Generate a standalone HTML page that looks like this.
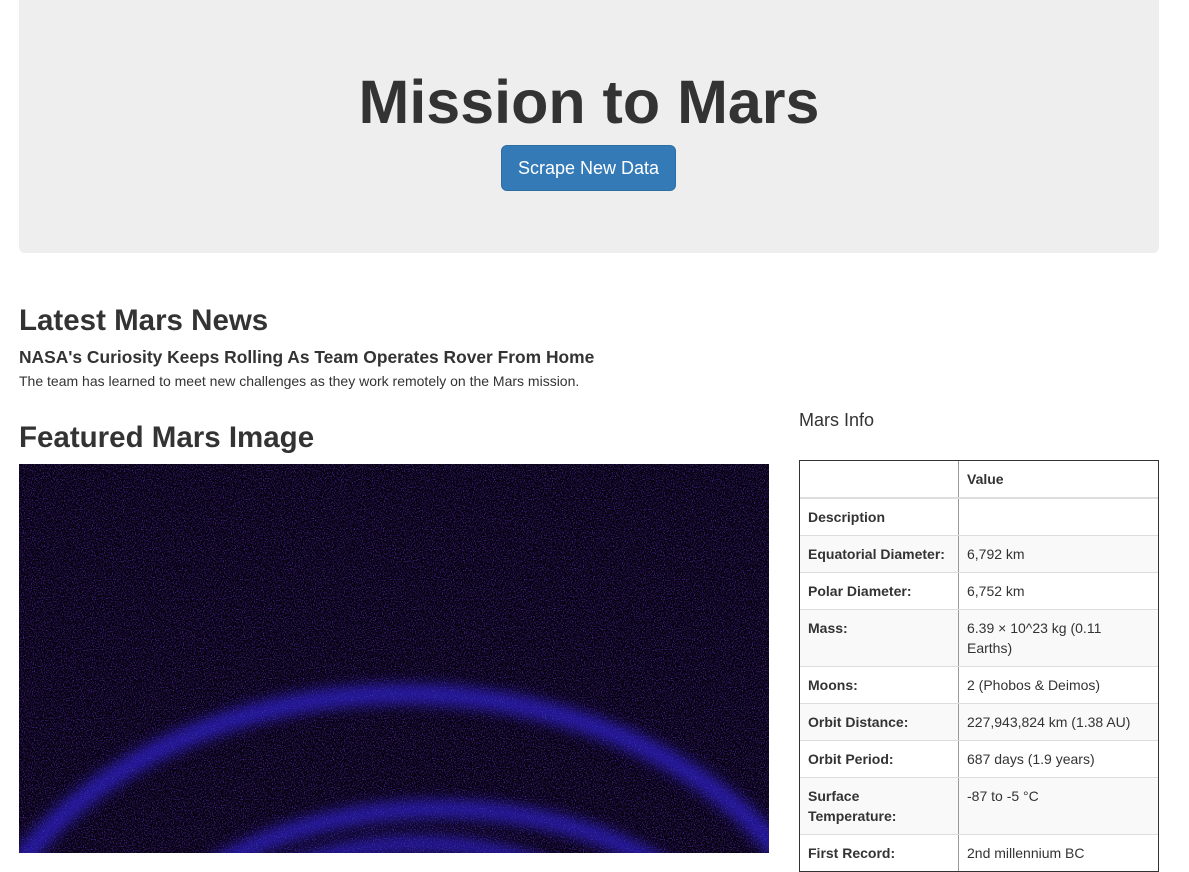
<!DOCTYPE html>
<html><head><meta charset="utf-8"><style>
body{margin:0;background:#fff;font-family:"Liberation Sans",Helvetica,Arial,sans-serif;color:#333;font-size:14px;line-height:1.42857;width:1189px;height:853px;overflow:hidden;position:relative}
.jumbo{position:absolute;left:19px;top:-10px;width:1140px;height:263px;background:#eee;border-radius:6px;text-align:center}
.jumbo h1{margin:0;position:absolute;top:74px;width:100%;font-size:61px;font-weight:bold;line-height:76px;color:#333}
.btn{position:absolute;left:482px;top:155px;width:175px;height:46px;box-sizing:border-box;background:#337ab7;border:1px solid #2e6da4;border-radius:6px;color:#fff;font-size:18px;line-height:44px}
.a{position:absolute;margin:0;white-space:nowrap}
h2.a{font-size:29.5px;font-weight:bold;line-height:33px}
table{position:absolute;left:799px;top:460px;width:360px;border-collapse:collapse;outline:1px solid #333;outline-offset:-1px}
td,th{border:1px solid #ddd;padding:8px;line-height:20px;vertical-align:top;text-align:left;font-size:14px}
th{font-weight:bold}
thead th{border-bottom:2px solid #ddd}
tr.s td,tr.s th{background:#f9f9f9}
th.h1c{width:142px}
tr td:last-child, tr th:last-child{border-right:1px solid #333}
tr th:first-child{border-left:1px solid #333;border-right:1px solid #999}
</style></head><body>
<div class="jumbo"><h1>Mission to Mars</h1><div class="btn">Scrape New Data</div></div>
<h2 class="a" style="left:19px;top:304px">Latest Mars News</h2>
<div class="a" style="left:19px;top:346px;font-size:17.4px;font-weight:bold;line-height:22px">NASA's Curiosity Keeps Rolling As Team Operates Rover From Home</div>
<div class="a" style="left:19px;top:372px;font-size:14px">The team has learned to meet new challenges as they work remotely on the Mars mission.</div>
<h2 class="a" style="left:19px;top:421px">Featured Mars Image</h2>
<div class="a" style="left:799px;top:409px;font-size:18px;font-weight:500;line-height:22px">Mars Info</div>
<svg class="a" style="left:19px;top:464px" width="750" height="389" viewBox="0 0 750 389">
<defs>
<filter id="n" x="0" y="0" width="100%" height="100%"><feTurbulence type="fractalNoise" baseFrequency="0.9" numOctaves="1" seed="3"/><feColorMatrix type="matrix" values="0 0 0 0 0.2  0 0 0 0 0.05  0 0 0 0 0.85  0 0 0 2.4 -1.2"/></filter>
<filter id="n2" x="0" y="0" width="100%" height="100%"><feTurbulence type="fractalNoise" baseFrequency="0.95" numOctaves="1" seed="9"/><feColorMatrix type="matrix" values="0 0 0 0 0.2  0 0 0 0 0.9  0 0 0 0 0.8  0 0 0 4 -2.7"/></filter>
<filter id="b"><feGaussianBlur stdDeviation="7"/></filter>
<mask id="m"><rect width="750" height="389" fill="#000"/><g filter="url(#b)" fill="none" stroke="#fff">
<ellipse cx="385" cy="560" rx="440" ry="330" stroke-width="20"/>
<ellipse cx="420" cy="560" rx="330" ry="215" stroke-width="18"/>
<ellipse cx="400" cy="620" rx="300" ry="240" stroke-width="16"/></g></mask>
</defs>
<rect width="750" height="389" fill="#060210"/>
<rect width="750" height="389" filter="url(#n)"/>
<g mask="url(#m)"><rect width="750" height="389" fill="#3020d0" opacity="0.75"/><rect width="750" height="389" filter="url(#n2)"/></g>
</svg>
<table>
<thead><tr><th class="h1c"></th><th>Value</th></tr></thead>
<tbody>
<tr><th>Description</th><td></td></tr>
<tr class="s"><th>Equatorial Diameter:</th><td>6,792 km</td></tr>
<tr><th>Polar Diameter:</th><td>6,752 km</td></tr>
<tr class="s"><th>Mass:</th><td>6.39 × 10^23 kg (0.11 Earths)</td></tr>
<tr><th>Moons:</th><td>2 (Phobos &amp; Deimos)</td></tr>
<tr class="s"><th>Orbit Distance:</th><td>227,943,824 km (1.38 AU)</td></tr>
<tr><th>Orbit Period:</th><td>687 days (1.9 years)</td></tr>
<tr class="s"><th>Surface Temperature:</th><td>-87 to -5 °C</td></tr>
<tr><th>First Record:</th><td>2nd millennium BC</td></tr>
</tbody></table>
</body></html>
